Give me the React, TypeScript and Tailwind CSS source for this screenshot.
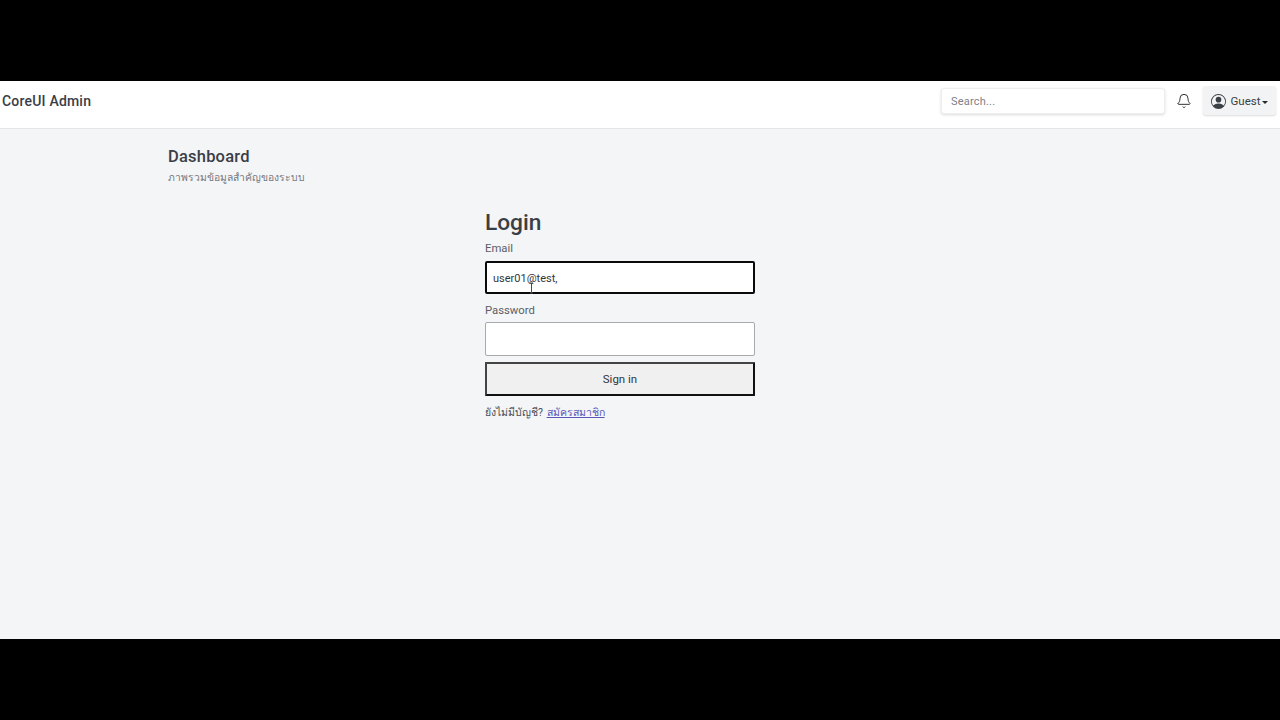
import { Bell } from "lucide-react";

function UserIcon() {
  return (
    <svg width="15" height="15" viewBox="0 0 16 16" fill="currentColor">
      <path d="M11 6a3 3 0 1 1-6 0 3 3 0 0 1 6 0" />
      <path fillRule="evenodd" d="M0 8a8 8 0 1 1 16 0A8 8 0 0 1 0 8m8-7a7 7 0 0 0-5.468 11.37C3.242 11.226 4.805 10 8 10s4.757 1.225 5.468 2.37A7 7 0 0 0 8 1" />
    </svg>
  );
}

export default function App() {
  return (
    <div className="flex h-[720px] flex-col bg-black font-['Roboto','Noto_Sans',sans-serif]">
      <div className="h-[81px] shrink-0" />
      <div className="flex h-[558px] flex-col bg-[#f4f5f7] text-[#2c3038]">
        <header className="flex h-[48px] shrink-0 items-start justify-between border-b border-[#e3e5e9] bg-white pt-[5px] pr-[4px] pl-[2px]">
          <span className="mt-[5px] text-[14px] leading-5 font-medium tracking-[0.2px] text-[#3a3e46]">CoreUI Admin</span>
          <div className="flex items-start">
            <input
              placeholder="Search..."
              className="mt-[2px] mr-[11px] h-[26px] w-[224px] rounded-[3px] border border-[#eceef0] bg-white px-[9px] text-[11px] tracking-[0.2px] shadow-[0_1px_3px_rgba(0,0,0,0.14)] outline-none placeholder:text-[#7d8188]"
            />
            <Bell className="mt-[7px] mr-[11px] h-[16px] w-[16px] text-[#2f333a]" strokeWidth={1.5} />
            <button className="flex h-[29px] w-[73px] items-center justify-center gap-[5px] rounded-[3px] bg-[#f2f3f5] pt-[2px] text-[11.5px] text-[#3b3f46] shadow-[0_1px_2px_rgba(0,0,0,0.14)]">
              <UserIcon />
              <span className="flex items-center gap-[2px]">
                Guest
                <span className="mt-[1px] h-0 w-0 border-x-[3px] border-t-[3px] border-x-transparent border-t-[#25282d]" />
              </span>
            </button>
          </div>
        </header>
        <main className="flex-1 pt-[17px] pl-[168px]">
          <h1 className="text-[16.5px] leading-[22px] font-medium tracking-[0.2px] text-[#3a3e46]">Dashboard</h1>
          <p className="mt-[2px] text-[10.3px] leading-[16px] text-[#767a82]">ภาพรวมข้อมูลสำคัญของระบบ</p>
          <div className="mt-[23px] ml-[317px] w-[270px]">
            <h2 className="text-[22.7px] leading-[28px] font-medium text-[#3a3e46]">Login</h2>
            <label className="mt-[4px] block text-[11.3px] leading-[16px] text-[#5a5e66]">Email</label>
            <div className="relative mt-[4px]">
              <input
                defaultValue="user01@test,"
                className="block h-[33px] w-full rounded-[2px] border-2 border-[#0a0a0a] bg-white px-[6px] pt-[1px] text-[11px] text-[#33363c] outline-none"
              />
              <svg className="pointer-events-none absolute top-[21px] left-[43px]" width="7" height="12" viewBox="0 0 7 12" fill="none" stroke="#4a4a4a" strokeWidth="1">
                <path d="M2 1h3M3.5 1v10M2 11h3" />
              </svg>
            </div>
            <label className="mt-[9px] block text-[11.3px] leading-[16px] text-[#5a5e66]">Password</label>
            <input
              type="password"
              className="mt-[3px] block h-[34px] w-full rounded-[2px] border border-[#a8aaad] bg-white outline-none"
            />
            <button className="mt-[6px] block h-[34px] w-full rounded-[1px] border-2 border-[#111] border-t-[#444] border-l-[#444] bg-[#f0f0f0] pt-[1px] text-[11.5px] text-[#33363c]">
              Sign in
            </button>
            <p className="mt-[9px] text-[10.5px] leading-[16px] text-[#4a4d54]">
              ยังไม่มีบัญชี? <a href="#" className="ml-[1px] text-[#5b57b8] underline">สมัครสมาชิก</a>
            </p>
          </div>
        </main>
      </div>
      <div className="flex-1" />
    </div>
  );
}
